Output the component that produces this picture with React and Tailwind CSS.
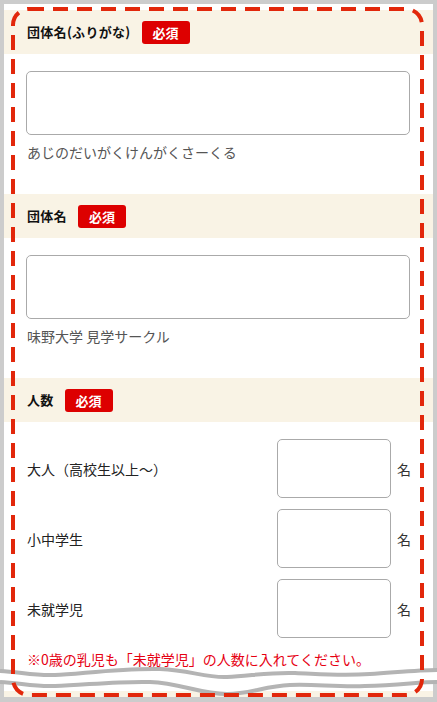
// Entry form — group name / headcount, framed by a dashed red border
const font = { fontFamily: '"Noto Sans CJK JP", "Noto Sans", sans-serif' };

function Badge() {
  return (
    <span className="flex h-[23px] w-[48px] items-center justify-center rounded-[3px] bg-[#dd0000] text-[13px] font-bold leading-none text-white">
      必須
    </span>
  );
}

function SectionHeader({ label, className = '' }) {
  return (
    <div className={`flex h-[44px] items-center gap-[11px] bg-[#f9f3e5] pl-[23px] ${className}`}>
      <span className="text-[13px] font-bold leading-[20px] tracking-[0.3px] text-[#111]">{label}</span>
      <Badge />
    </div>
  );
}

function TextField({ hint }) {
  return (
    <div className="pl-[22px] pr-[23px] pt-[17px]">
      <div className="h-[64px] w-full rounded-[5px] border border-[#aaaaaa] bg-white" />
      <p className="mt-[7px] pl-[1px] text-[14px] leading-[20px] text-[#555]">{hint}</p>
    </div>
  );
}

function CountRow({ label }) {
  return (
    <div className="flex h-[59px] items-center">
      <span className="flex-1 pl-[1px] text-[14px] leading-[20px] text-[#222]">{label}</span>
      <div className="h-[59px] w-[114px] rounded-[5px] border border-[#aaaaaa] bg-white" />
      <span className="ml-[6px] w-[13px] text-[14px] leading-[20px] text-[#333]">名</span>
    </div>
  );
}

function WaveCut() {
  const upper =
    'M0,669 C20,670 35,674 55,673 C80,672 120,666 160,667 C190,668 205,676 227,675 C250,674 270,670 295,671 C320,672 340,674 370,672 C400,670 420,668 437,668';
  const lowerBack =
    'L437,680 C420,680 400,683 365,684 C335,685 315,682 290,683 C265,684 250,692 227,692 C200,692 180,681 150,680 C120,679 85,683 55,684 C35,685 20,681 0,680 Z';
  const lower =
    'M0,680 C20,681 35,685 55,684 C85,683 120,679 150,680 C180,681 200,692 227,692 C250,692 265,684 290,683 C315,682 335,685 365,684 C400,683 420,680 437,680';
  return (
    <svg className="pointer-events-none absolute inset-0" width="437" height="702" viewBox="0 0 437 702">
      <g transform="translate(0,2)">
        <path d={upper + ' ' + lowerBack} fill="#ffffff" />
        <path d={upper} fill="none" stroke="#b4b4b4" strokeWidth="4" />
        <path d={lower} fill="none" stroke="#b4b4b4" strokeWidth="4" />
      </g>
    </svg>
  );
}

function DashedFrame() {
  return (
    <svg className="pointer-events-none absolute inset-0" width="437" height="702" viewBox="0 0 437 702">
      <rect
        x="13"
        y="9"
        width="409"
        height="686"
        rx="16"
        fill="none"
        stroke="#e2270b"
        strokeWidth="4"
        strokeDasharray="15 9"
      />
    </svg>
  );
}

export default function App() {
  return (
    <div className="relative h-[702px] w-[437px] bg-[#cccccc] p-[4px] pb-[5px]" style={font}>
      <div className="h-full overflow-hidden bg-white pt-[6px]">
        <SectionHeader label="団体名(ふりがな)" className="h-[43px]" />
        <TextField hint="あじのだいがくけんがくさーくる" />

        <SectionHeader label="団体名" className="mt-[32px]" />
        <TextField hint="味野大学 見学サークル" />

        <SectionHeader label="人数" className="mt-[32px]" />
        <div className="flex flex-col gap-[11px] pl-[22px] pr-[23px] pt-[17px]">
          <CountRow label="大人（高校生以上〜）" />
          <CountRow label="小中学生" />
          <CountRow label="未就学児" />
        </div>
        <p className="mt-[11px] pl-[23px] text-[14px] leading-[20px] text-[#e60012]">
          ※0歳の乳児も「未就学児」の人数に入れてください。
        </p>

        <div className="mt-[22px] h-[44px] bg-[#f9f3e5]" />
      </div>

      <WaveCut />
      <DashedFrame />
    </div>
  );
}
